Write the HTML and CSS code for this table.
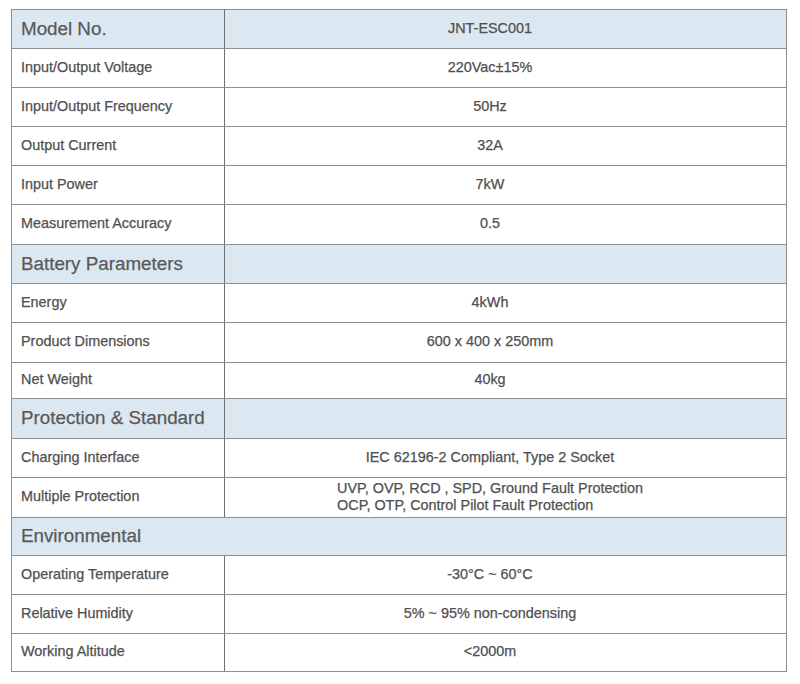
FILE: index.html
```html
<!DOCTYPE html>
<html lang="en">
<head>
<meta charset="utf-8">
<title>JNT-ESC001 Specifications</title>
<link rel="stylesheet" href="styles.css">
</head>
<body>
<div class="page">
<table class="spec">
  <tbody>
    <tr class="head"><td class="label">Model No.</td><td class="value model">JNT-ESC001</td></tr>
    <tr><td class="label">Input/Output Voltage</td><td class="value">220Vac±15%</td></tr>
    <tr><td class="label">Input/Output Frequency</td><td class="value">50Hz</td></tr>
    <tr><td class="label">Output Current</td><td class="value">32A</td></tr>
    <tr><td class="label">Input Power</td><td class="value">7kW</td></tr>
    <tr class="tall"><td class="label">Measurement Accuracy</td><td class="value">0.5</td></tr>
    <tr class="head"><td class="label">Battery Parameters</td><td class="value"></td></tr>
    <tr><td class="label">Energy</td><td class="value">4kWh</td></tr>
    <tr class="tall"><td class="label">Product Dimensions</td><td class="value">600 x 400 x 250mm</td></tr>
    <tr class="short"><td class="label">Net Weight</td><td class="value">40kg</td></tr>
    <tr class="head tall"><td class="label">Protection &amp; Standard</td><td class="value"></td></tr>
    <tr><td class="label">Charging Interface</td><td class="value">IEC 62196-2 Compliant, Type 2 Socket</td></tr>
    <tr class="tall"><td class="label">Multiple Protection</td><td class="value"><div class="lines"><div>UVP, OVP, RCD , SPD, Ground Fault Protection</div><div>OCP, OTP, Control Pilot Fault Protection</div></div></td></tr>
    <tr class="head mid"><td class="label" colspan="2">Environmental</td></tr>
    <tr><td class="label">Operating Temperature</td><td class="value">-30°C ~ 60°C</td></tr>
    <tr><td class="label">Relative Humidity</td><td class="value">5% ~ 95% non-condensing</td></tr>
    <tr class="mid"><td class="label">Working Altitude</td><td class="value">&lt;2000m</td></tr>
  </tbody>
</table>
</div>
</body>
</html>
```
FILE: styles.css
```css
html, body {
  margin: 0;
  padding: 0;
  background: #ffffff;
}

.page {
  padding: 9px 0 0 11px;
}

.spec {
  width: 776px;
  border-collapse: collapse;
  font-family: "Liberation Sans", Arial, sans-serif;
  font-size: 14.4px;
  color: #505050;
  -webkit-text-stroke: 0.25px #505050;
  table-layout: fixed;
}

.spec td {
  border-top: 1px solid #8f8f8f;
  border-bottom: 1px solid #8f8f8f;
  height: 36px;
  padding: 0 0 2px 0;
  vertical-align: middle;
  line-height: 17px;
}

.spec td.label {
  width: 203px;
  padding-left: 9px;
  border-left: 1px solid #8f8f8f;
  border-right: 1px solid #707070;
}

.spec td.value {
  text-align: center;
  padding-right: 31px;
  border-right: 1px solid #8f8f8f;
}

.spec tr.tall td { height: 37px; }
.spec tr.short td { height: 33px; }
.spec tr.mid td { height: 35px; }

.spec tr.head td {
  background: #dce8f1;
}

.spec tr.head td.label {
  font-size: 18.8px;
  color: #595959;
  -webkit-text-stroke: 0.25px #595959;
}

.spec tr.head td.label[colspan] {
  border-right: 1px solid #8f8f8f;
}

.lines {
  display: inline-block;
  text-align: left;
}
```
